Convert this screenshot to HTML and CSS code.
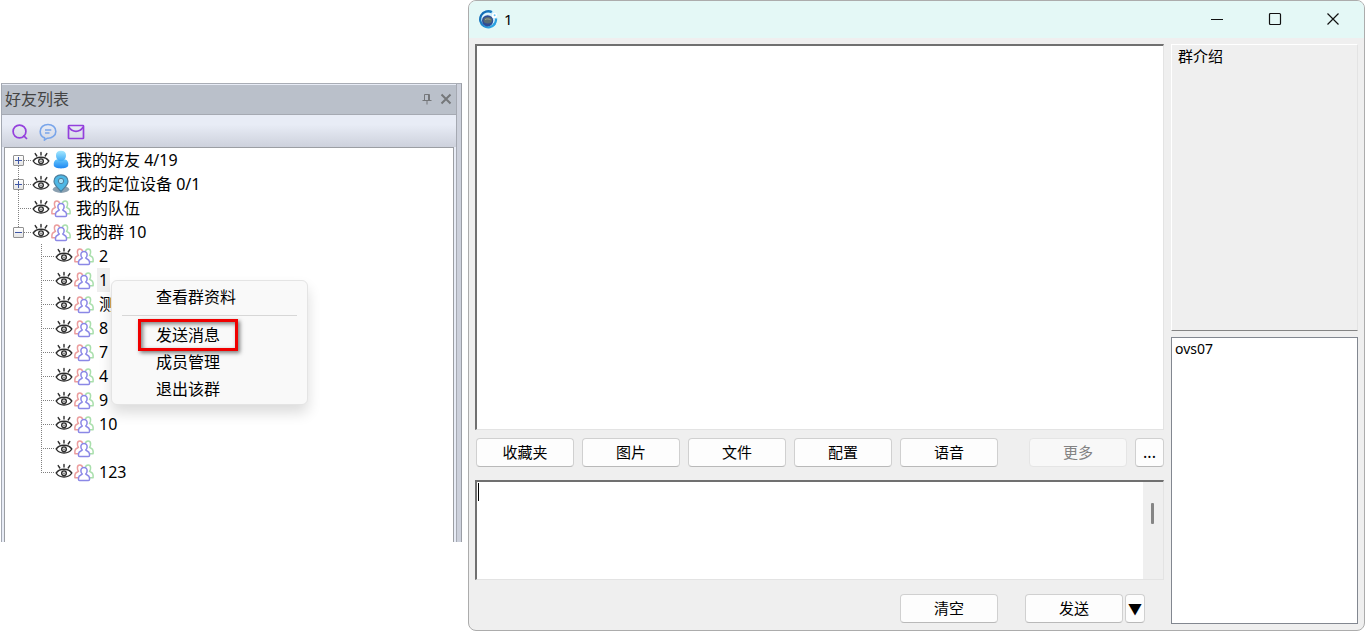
FILE: index.html
```html
<!DOCTYPE html>
<html lang="zh-CN">

<head>
    <meta charset="UTF-8">
    <meta name="viewport" content="width=device-width, initial-scale=1.0">
    <title>好友列表</title>
    <link rel="stylesheet" href="styles.css">
</head>

<body>
    <!-- shared icons -->
    <svg class="sprite" width="0" height="0" aria-hidden="true">
        <defs>
            <linearGradient id="head" x1="0" y1="0" x2="0" y2="1">
                <stop offset="0" stop-color="#a5e8ff"/>
                <stop offset="1" stop-color="#3fa9f5"/>
            </linearGradient>
            <linearGradient id="torso" x1="0" y1="0" x2="0" y2="1">
                <stop offset="0" stop-color="#64c5fb"/>
                <stop offset="1" stop-color="#1e86f2"/>
            </linearGradient>
            <linearGradient id="ring" x1="0" y1="0" x2="1" y2="1">
                <stop offset="0" stop-color="#0c5ba8"/>
                <stop offset="1" stop-color="#35b4f0"/>
            </linearGradient>
        </defs>
        <symbol id="eye" viewBox="0 0 18 18">
            <g fill="none" stroke="#2b2b2b" stroke-width="1.4" stroke-linecap="round">
                <path d="M1.2 10C4.5 5 13.5 5 16.8 10C13.5 15.4 4.5 15.4 1.2 10Z"/>
                <circle cx="9" cy="10.2" r="2.3"/>
                <path d="M9 1.4V4M3.2 2.6L4.8 5M14.8 2.6L13.2 5"/>
            </g>
            <circle cx="9" cy="10.2" r="0.7" fill="#2b2b2b"/>
        </symbol>
        <symbol id="group" viewBox="0 0 20 20">
            <g fill="none" stroke-width="1.5" stroke-linejoin="round">
                <path stroke="#eb9d9d" d="M8.4 5.2C8 2.6 3.7 2 3.4 5.6C3.3 7.8 4 8.8 4.5 9.4C3 10.4 1 10.6 .9 13V15.8H4"/>
                <path stroke="#a9dfac" d="M11.6 5.2C12 2.6 16.3 2 16.6 5.6C16.7 7.8 16 8.8 15.5 9.4C17 10.4 19 10.6 19.1 13V15.8H16"/>
                <path stroke="#8b88e6" d="M10 5.6C7.6 5.6 6.8 7.2 6.9 9C7 10.5 7.6 11.4 8.3 12C7.5 13.4 4.7 12.9 4.5 16V17.6C4.5 18.2 5 18.6 5.6 18.6H14.4C15 18.6 15.5 18.2 15.5 17.6V16C15.3 12.9 12.5 13.4 11.7 12C12.4 11.4 13 10.5 13.1 9C13.2 7.2 12.4 5.6 10 5.6Z"/>
            </g>
        </symbol>
        <symbol id="person" viewBox="0 0 20 20">
            <path fill="url(#torso)" d="M5.5 9.6H14.5C16.6 10.4 17.6 12.5 17.2 15.6C16.6 19.4 3.4 19.4 2.8 15.6C2.4 12.5 3.4 10.4 5.5 9.6Z"/>
            <path fill="url(#head)" d="M10 .8C6.6 .8 4.9 2.8 5 5.6C5.1 9 7 11.2 10 11.2S14.9 9 15 5.6C15.1 2.8 13.4 .8 10 .8Z"/>
        </symbol>
        <symbol id="pin" viewBox="0 0 20 20">
            <ellipse cx="10" cy="15.3" rx="8.2" ry="3.6" fill="#8ba0b0"/>
            <path fill="#4eb7e5" stroke="#4d7f9d" stroke-width="1.2" d="M10 .9C5.8 .9 3 3.6 3 7.2C3 11.5 8 14.5 10 17.5C12 14.5 17 11.5 17 7.2C17 3.6 14.2 .9 10 .9Z"/>
            <circle cx="10" cy="7" r="2.7" fill="#a5e0f6" stroke="#4d7f9d"/>
        </symbol>
    </svg>

    <aside class="friends">
        <header class="friends-title">
            <h2>好友列表</h2>
            <button type="button" aria-label="固定">
                <svg width="12" height="12" viewBox="0 0 12 12" fill="none" stroke="#75777a"><path d="M3.5 7V1.5H8.5V7M7.5 1.5V7M1.5 7.5H10.5M6 8V11.5"/></svg>
            </button>
            <button type="button" aria-label="关闭">
                <svg width="12" height="12" viewBox="0 0 12 12" fill="none" stroke="#75777a" stroke-width="2"><path d="M1.5 1.5L10.5 10.5M10.5 1.5L1.5 10.5"/></svg>
            </button>
        </header>
        <div class="friends-tools">
            <button type="button" aria-label="查找">
                <svg width="18" height="18" viewBox="0 0 18 18" fill="none" stroke="#9440dc" stroke-width="1.7"><circle cx="8.5" cy="8.5" r="6.4"/><path d="M12.3 12.3L16 16"/></svg>
            </button>
            <button type="button" aria-label="消息">
                <svg width="18" height="18" viewBox="0 0 18 18" fill="none" stroke="#79a5ea" stroke-width="1.6"><path d="M5.5 14.8V17L8.3 15.2C13 15.5 16.8 12.6 16.8 8.4C16.8 4.4 13.5 1.5 9 1.5S1.2 4.4 1.2 8.4C1.2 11.4 3 13.8 5.5 14.8Z"/><path d="M6 7H12.3M6 10H10.5"/></svg>
            </button>
            <button type="button" aria-label="邮件">
                <svg width="18" height="18" viewBox="0 0 18 18" fill="none" stroke="#9440dc" stroke-width="1.7" stroke-linejoin="round"><rect x="1.5" y="2.5" width="15" height="13" rx=".6"/><path d="M1.8 4C5.5 9.7 12.5 9.7 16.2 4"/></svg>
            </button>
        </div>

        <div class="tree">
            <ul class="root">
                <li>
                    <div class="row"><span class="joint"><button type="button" class="toggle plus" aria-label="展开"></button></span><svg class="eye"><use href="#eye"/></svg><svg class="kind"><use href="#person"/></svg><span class="name">我的好友 4/19</span></div>
                </li>
                <li>
                    <div class="row"><span class="joint"><button type="button" class="toggle plus" aria-label="展开"></button></span><svg class="eye"><use href="#eye"/></svg><svg class="kind"><use href="#pin"/></svg><span class="name">我的定位设备 0/1</span></div>
                </li>
                <li>
                    <div class="row"><span class="joint"></span><svg class="eye"><use href="#eye"/></svg><svg class="kind"><use href="#group"/></svg><span class="name">我的队伍</span></div>
                </li>
                <li>
                    <div class="row"><span class="joint"><button type="button" class="toggle" aria-label="收起"></button></span><svg class="eye"><use href="#eye"/></svg><svg class="kind"><use href="#group"/></svg><span class="name">我的群 10</span></div>
                    <ul>
                        <li><div class="row"><span class="joint"></span><svg class="eye"><use href="#eye"/></svg><svg class="kind"><use href="#group"/></svg><span class="name">2</span></div></li>
                        <li><div class="row"><span class="joint"></span><svg class="eye"><use href="#eye"/></svg><svg class="kind"><use href="#group"/></svg><span class="name selected">1</span></div></li>
                        <li><div class="row"><span class="joint"></span><svg class="eye"><use href="#eye"/></svg><svg class="kind"><use href="#group"/></svg><span class="name">测</span></div></li>
                        <li><div class="row"><span class="joint"></span><svg class="eye"><use href="#eye"/></svg><svg class="kind"><use href="#group"/></svg><span class="name">8</span></div></li>
                        <li><div class="row"><span class="joint"></span><svg class="eye"><use href="#eye"/></svg><svg class="kind"><use href="#group"/></svg><span class="name">7</span></div></li>
                        <li><div class="row"><span class="joint"></span><svg class="eye"><use href="#eye"/></svg><svg class="kind"><use href="#group"/></svg><span class="name">4</span></div></li>
                        <li><div class="row"><span class="joint"></span><svg class="eye"><use href="#eye"/></svg><svg class="kind"><use href="#group"/></svg><span class="name">9</span></div></li>
                        <li><div class="row"><span class="joint"></span><svg class="eye"><use href="#eye"/></svg><svg class="kind"><use href="#group"/></svg><span class="name">10</span></div></li>
                        <li><div class="row"><span class="joint"></span><svg class="eye"><use href="#eye"/></svg><svg class="kind"><use href="#group"/></svg><span class="name"></span></div></li>
                        <li><div class="row"><span class="joint"></span><svg class="eye"><use href="#eye"/></svg><svg class="kind"><use href="#group"/></svg><span class="name">123</span></div></li>
                    </ul>
                </li>
            </ul>

            <div class="menu">
                <button type="button">查看群资料</button>
                <hr>
                <button type="button" class="marked">发送消息</button>
                <button type="button">成员管理</button>
                <button type="button">退出该群</button>
            </div>
        </div>
    </aside>

    <main class="chat">
        <header class="chat-title">
            <svg class="logo" width="20" height="20" viewBox="0 0 20 20">
                <circle cx="10" cy="10" r="9" fill="#c9ecfa"/>
                <path fill="url(#ring)" d="M14.5 2.1A9.2 9.2 0 1 0 17.8 15.5L15.8 14A6.8 6.8 0 1 1 13.2 4.3Z"/>
                <path fill="#2a9fe0" d="M17 9.5H19.2C19.3 12.4 18.3 15 16.5 16.8L15 15.2C16.4 13.7 17.1 11.7 17 9.5Z"/>
                <circle cx="9.6" cy="11.8" r="5.6" fill="#2d4c96"/>
                <ellipse cx="9.8" cy="11.3" rx="4.3" ry="3.3" fill="#596c72"/>
                <path d="M7 10.6C8.5 9.6 11 9.8 12.5 10.7" stroke="#a3a58e" fill="none"/>
                <path d="M4.5 7.5C6.5 5 10 4 13 5.2" stroke="#e8f8ff" stroke-width="1.2" fill="none"/>
                <circle cx="16.4" cy="6.4" r="2.6" fill="#fff"/>
                <circle cx="16.6" cy="6.2" r="1" fill="#68c6f3"/>
            </svg>
            <h1>1</h1>
            <button type="button" aria-label="最小化">
                <svg width="14" height="14" viewBox="0 0 14 14" stroke="#111"><path d="M1 7.5H13"/></svg>
            </button>
            <button type="button" aria-label="最大化">
                <svg width="14" height="14" viewBox="0 0 14 14" fill="none" stroke="#111" stroke-width="1.2"><rect x="1.5" y="1.5" width="11" height="11" rx="1"/></svg>
            </button>
            <button type="button" aria-label="关闭">
                <svg width="14" height="14" viewBox="0 0 14 14" stroke="#111" stroke-width="1.2"><path d="M1.5 1.5L12.5 12.5M12.5 1.5L1.5 12.5"/></svg>
            </button>
        </header>

        <div class="chat-body">
            <section class="talk">
                <div class="messages"></div>
                <div class="tools">
                    <button type="button">收藏夹</button>
                    <button type="button">图片</button>
                    <button type="button">文件</button>
                    <button type="button">配置</button>
                    <button type="button">语音</button>
                    <button type="button" class="more" disabled>更多</button>
                    <button type="button" class="dots">...</button>
                </div>
                <div class="editor">
                    <textarea aria-label="消息内容"></textarea>
                    <span class="caret"></span>
                    <div class="scroll"><span class="thumb"></span></div>
                </div>
                <div class="actions">
                    <button type="button" class="clear">清空</button>
                    <button type="button">发送</button>
                    <button type="button" class="drop" aria-label="发送选项">▼</button>
                </div>
            </section>
            <section class="side">
                <div class="intro">群介绍</div>
                <ul class="members">
                    <li>ovs07</li>
                </ul>
            </section>
        </div>
    </main>
</body>

</html>
```
FILE: styles.css
```css
*,
*::before,
*::after {
    box-sizing: border-box;
}

body {
    margin: 0;
    display: flex;
    gap: 6px;
    min-height: 100vh;
    background: #fff;
    color: #000;
    font-family: "Noto Sans", "Noto Sans CJK SC", sans-serif;
    font-size: 16px;
}

button {
    padding: 0;
    border: none;
    background: none;
    color: inherit;
    font: inherit;
}

h1,
h2 {
    margin: 0;
    font-weight: normal;
}

ul {
    margin: 0;
    padding: 0;
    list-style: none;
}

svg {
    display: block;
}

.sprite {
    position: absolute;
}

/* friend list */
.friends {
    flex: none;
    align-self: flex-start;
    width: 461px;
    margin: 83px 0 0 1px;
    border-top: 1px solid #a9adb5;
    border-left: 1px solid #a3a8b2;
    border-right: 1px solid #9b9ea5;
    background: linear-gradient(to left, #cdd1dc 4px, #a5a9b2 4px, #a5a9b2 5px, #e8ecf6 5px);
}

.friends-title {
    display: flex;
    align-items: center;
    height: 31px;
    margin-right: 5px;
    padding: 0 4px 2px 3px;
    border-top: 1px solid #e8ecf6;
    border-bottom: 1px solid #a5a9b2;
    background: #bac0ca;
    color: #444;
}

.friends-title h2 {
    flex: 1;
    font-size: 16px;
    line-height: 26px;
}

.friends-title button {
    margin-left: 7px;
}

.friends-tools {
    display: flex;
    align-items: center;
    height: 32px;
    margin-right: 5px;
    padding: 2px 0 0 4px;
    background: linear-gradient(#e8ecf6 30%, #cdd1dc);
}

.friends-tools button {
    display: flex;
    justify-content: center;
    width: 28px;
}

.tree {
    position: relative;
    margin: 0 7px 0 2px;
    padding-bottom: 58px;
    border: 1px solid #9b9ea3;
    border-bottom: none;
    background: #fff;
}

.row {
    display: flex;
    align-items: center;
    height: 24px;
    line-height: 24px;
}

.tree li ul {
    padding-left: 23px;
}

.joint {
    position: relative;
    width: 27px;
    height: 24px;
}

.joint::before,
.joint::after {
    content: "";
    position: absolute;
    left: 13px;
}

.joint::before {
    top: 0;
    width: 1px;
    height: 24px;
    background: repeating-linear-gradient(#808080 0 1px, transparent 1px 2px);
}

.joint::after {
    top: 12px;
    width: 13px;
    height: 1px;
    background: repeating-linear-gradient(to right, #808080 0 1px, transparent 1px 2px);
}

.root > li:first-child > .row .joint::before {
    top: 12px;
    height: 12px;
}

.tree li:last-child > .row .joint::before {
    height: 12px;
}

.toggle {
    position: absolute;
    z-index: 1;
    left: 8px;
    top: 7px;
    width: 11px;
    height: 11px;
    border: 1px solid #919191;
    border-radius: 1px;
    background:
        linear-gradient(#3f57a5, #3f57a5) center / 7px 1px no-repeat,
        linear-gradient(#fff, #e4e4e4);
}

.toggle.plus {
    background:
        linear-gradient(#3f57a5, #3f57a5) center / 7px 1px no-repeat,
        linear-gradient(#3f57a5, #3f57a5) center / 1px 7px no-repeat,
        linear-gradient(#fff, #e4e4e4);
}

.eye {
    width: 18px;
    height: 18px;
    margin-right: 1px;
}

.kind {
    width: 20px;
    height: 20px;
    margin-right: 3px;
}

.name {
    padding: 0 2px;
}

.name.selected {
    background: #efefef;
}

.menu {
    position: absolute;
    z-index: 2;
    top: 132px;
    left: 106px;
    width: 197px;
    padding: 3px 0 1px;
    border: 1px solid #e4e4e4;
    border-radius: 6px;
    background: #f9f9f9;
    box-shadow: 0 8px 14px rgba(0, 0, 0, 0.14);
}

.menu button {
    position: relative;
    display: block;
    width: 100%;
    height: 27px;
    padding-left: 44px;
    line-height: 27px;
    text-align: left;
}

.menu hr {
    height: 1px;
    margin: 4px 10px 6px;
    border: none;
    background: #d7d7d7;
}

.menu .marked::after {
    content: "";
    position: absolute;
    left: 26px;
    top: -3px;
    width: 100px;
    height: 32px;
    border: 3px solid #f00000;
    box-shadow: 2px 2px 4px rgba(0, 0, 0, 0.5), inset 2px 2px 4px rgba(0, 0, 0, 0.5);
}

/* chat window */
.chat {
    flex: 1;
    display: flex;
    flex-direction: column;
    border: 1px solid #acacac;
    border-radius: 8px;
    background: #efefef;
    overflow: hidden;
}

.chat-title {
    display: flex;
    align-items: center;
    height: 37px;
    padding: 0 2px 1px 9px;
    background: #e4f8f6;
}

.chat-title h1 {
    flex: 1;
    padding-left: 6px;
    font-size: 15px;
    line-height: 20px;
}

.chat-title button {
    display: flex;
    justify-content: center;
    width: 58px;
}

.chat-body {
    flex: 1;
    display: grid;
    grid-template-columns: 1fr 187px;
    gap: 7px;
    padding: 6px;
    font-size: 15px;
}

.talk {
    display: flex;
    flex-direction: column;
    padding-bottom: 1px;
}

.messages,
.editor {
    border: 1px solid #e3e3e3;
    border-top: 2px solid #707070;
    border-left: 2px solid #707070;
    background: #fff;
}

.messages {
    flex: 1;
}

.tools,
.actions {
    display: flex;
}

.tools {
    gap: 8px;
    margin: 8px 0 13px;
    padding-left: 1px;
}

.tools button,
.actions button {
    width: 98px;
    height: 29px;
    padding-bottom: 2px;
    border: 1px solid #d0d0d0;
    border-bottom-color: #b9b9b9;
    border-radius: 4px;
    background: #fdfdfd;
}

.tools .more {
    margin-left: auto;
    border-color: #e5e5e5;
    background: #f8f8f8;
    color: #838383;
}

.tools .dots {
    width: 29px;
    font-size: 16px;
}

.editor {
    position: relative;
    display: flex;
    height: 100px;
}

.editor textarea {
    flex: 1;
    padding: 2px;
    border: none;
    outline: none;
    resize: none;
    background: #fff;
    font: inherit;
    overflow: hidden;
}

.caret {
    position: absolute;
    top: 1px;
    left: 1px;
    width: 1px;
    height: 18px;
    background: #000;
}

.scroll {
    width: 20px;
    padding: 21px 0 0 8px;
    background: #efefef;
}

.thumb {
    display: block;
    width: 3px;
    height: 21px;
    border-radius: 1px;
    background: #858585;
}

.actions {
    justify-content: flex-end;
    gap: 2px;
    margin-top: 14px;
    padding-right: 19px;
}

.actions .clear {
    margin-right: 25px;
}

.actions .drop {
    width: 20px;
    font-size: 14px;
}

.side {
    display: grid;
    grid-template-rows: 1fr 1fr;
    gap: 6px;
}

.intro {
    padding: 0 6px;
    border: 1px solid #fff;
    border-right-color: #e3e3e3;
    border-bottom-color: #848484;
    line-height: 22px;
}

.members {
    padding: 1px 3px;
    border: 1px solid #828790;
    background: #fff;
    font-size: 14px;
    line-height: 20px;
}
```
